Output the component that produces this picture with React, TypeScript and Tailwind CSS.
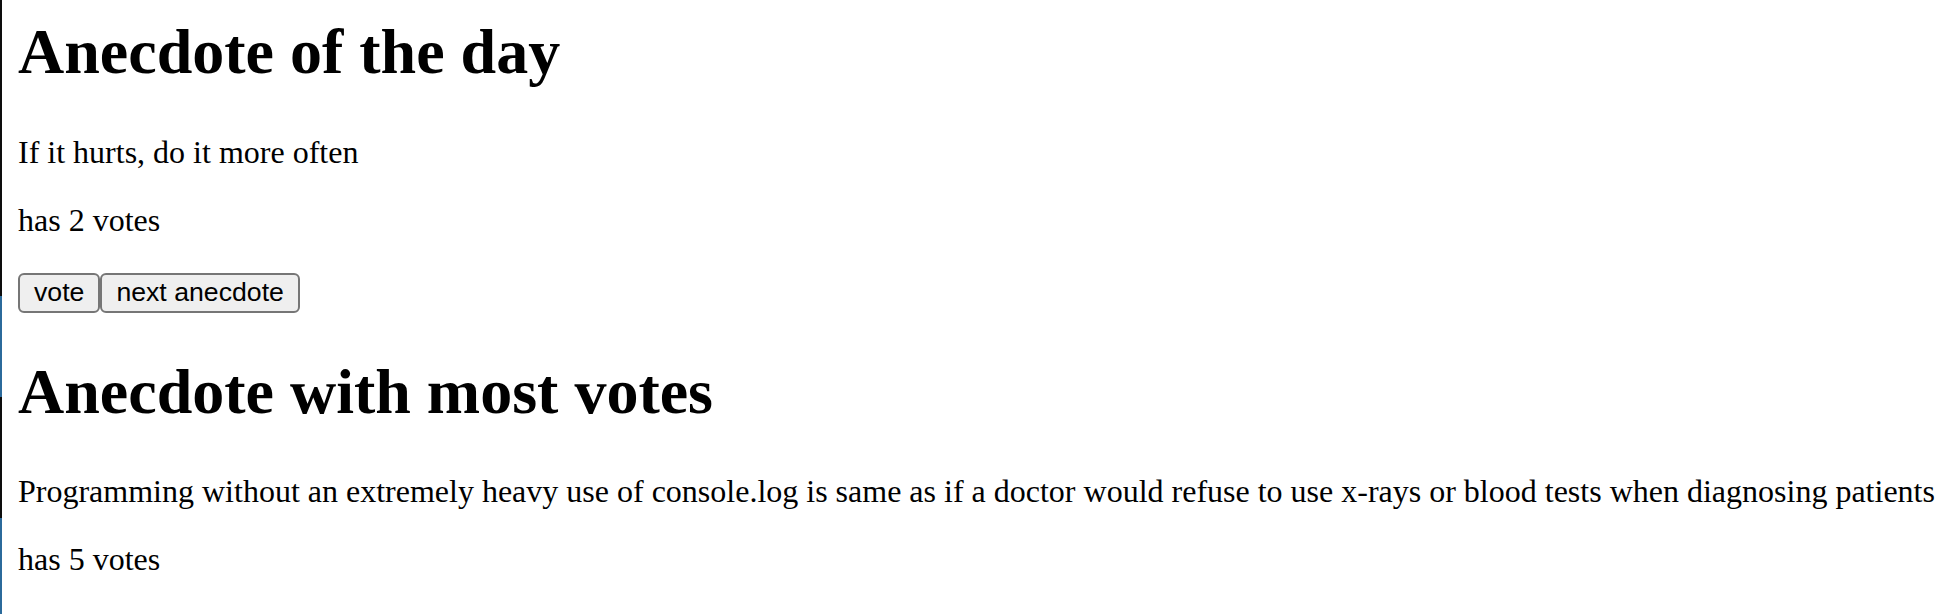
const serif = "font-['Liberation_Serif','Times_New_Roman',serif]";

const EdgeStripe = () => (
  <div className="flex w-[2px] shrink-0 flex-col">
    <div className="h-[296px] bg-[#0d0d0d]"></div>
    <div className="h-[101px] bg-[#2b6a9b]"></div>
    <div className="h-[121px] bg-[#0d0d0d]"></div>
    <div className="h-[96px] bg-[#2b6a9b]"></div>
  </div>
);

const Button = ({ label }: { label: string }) => (
  <button className="flex h-[40px] items-center rounded-[6px] border-2 border-[#767676] bg-[#efefef] px-[14px] pb-[1px] font-['Liberation_Sans',Arial,sans-serif] text-[26.67px] leading-none text-black">
    {label}
  </button>
);

export default function App() {
  return (
    <div className="flex h-[614px] w-[1960px] overflow-hidden bg-white">
      <EdgeStripe />
      <div className={`${serif} pl-[16px] pt-[15px] text-black`}>
        <h1 className="mb-[45px] text-[64px] font-bold leading-[74px]">Anecdote of the day</h1>
        <p className="mb-[32px] text-[32px] leading-[36px]">If it hurts, do it more often</p>
        <p className="text-[32px] leading-[36px]">has 2 votes</p>
        <div className="mt-[35px] flex">
          <Button label="vote" />
          <Button label="next anecdote" />
        </div>
        <h1 className="mt-[42px] mb-[44px] text-[64px] font-bold leading-[74px]">Anecdote with most votes</h1>
        <p className="mb-[32px] whitespace-nowrap text-[32px] leading-[36px]">
          Programming without an extremely heavy use of console.log is same as if a doctor would refuse to use x-rays or blood tests when diagnosing patients
        </p>
        <p className="text-[32px] leading-[36px]">has 5 votes</p>
      </div>
    </div>
  );
}
